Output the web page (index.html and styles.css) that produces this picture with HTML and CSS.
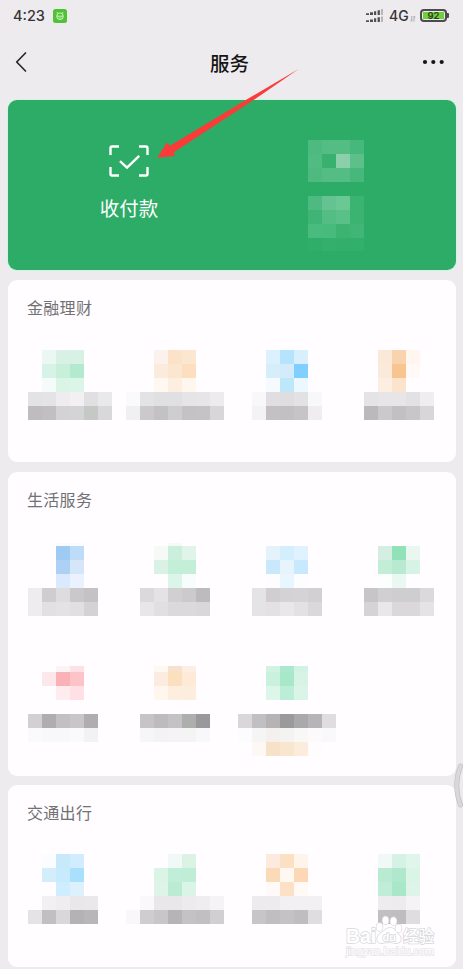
FILE: index.html
```html
<!DOCTYPE html>
<html lang="zh-CN">
<head>
<meta charset="utf-8">
<title>服务</title>
<link rel="stylesheet" href="styles.css">
</head>
<body>
<div class="screen">
  <header class="status">
    <span class="clock">4:23</span>
    <svg class="app-badge" width="14" height="14" viewBox="0 0 14 14">
      <rect width="14" height="14" rx="2.5" fill="#50c236"/>
      <g fill="none" stroke="#e8ffe2" stroke-width="0.8"><rect x="3.8" y="4" width="6.4" height="6.6" rx="3"/><path d="M3.8 7.2h6.400M4.800 4.400L3.900 3M9.200 4.400l.9-1.400M5.500 9h3"/></g>
    </svg>
    <div class="status-right">
      <svg class="signal" width="18" height="14" viewBox="0 0 18 14" fill="#505052">
        <path d="M0 4.3h3v1.7H0zM4 3.3h3v2.7H4zM8 2.2h2.2v3.8H8zM11.6 1.2h2.3v4.8h-2.3zM0 11.3h3v1.7H0zM4 10.4h3v2.6H4zM8 9.3h2.2v3.7H8zM11.6 8.2h2.3v4.8h-2.3z"/>
        <path d="M15 0h2v6h-2zM15 7.5h2v5.5h-2z" fill="#b7b6b9"/>
      </svg>
      <span class="network">4G</span>
      <svg class="updown" width="6" height="7" viewBox="0 0 6 7" fill="none" stroke="#aaa9ac"><path d="M1.8 1v5.3L.4 5M4 6.5V1l1.4 1.3"/></svg>
      <span class="battery"><span class="level">92</span></span>
    </div>
  </header>
  <nav class="nav">
    <svg width="14" height="22" viewBox="0 0 14 22" fill="none" stroke="#29282b" stroke-width="1.7" stroke-linecap="round" stroke-linejoin="round"><path d="M11.500 2L2.700 11l8.800 9"/></svg>
    <h1>服务</h1>
    <svg width="24" height="6" viewBox="0 0 24 6" fill="#161518"><circle cx="4" cy="3" r="2.1"/><circle cx="12.3" cy="3" r="2.1"/><circle cx="20.7" cy="3" r="2.1"/></svg>
  </nav>
  <main class="cards">
    <section class="pay">
      <div class="pay-item">
        <svg width="40" height="32" viewBox="0 0 40 32" fill="none" stroke="#fff" stroke-width="2.4">
          <path d="M10 1.5H3Q1.5 1.5 1.5 3v7M30 1.5h7q1.5 0 1.5 1.5v7M10 30.5H3Q1.5 30.5 1.5 29v-7M30 30.5h7q1.5 0 1.5-1.5v-7M11 16.200l7 6.500L30.200 10.800"/>
        </svg>
        <span>收付款</span>
      </div>
      <div class="pay-item"><svg class="mosaic wallet" width="56" height="111" data-tile="wallet"></svg></div>
    </section>
    <section class="card finance">
      <h2>金融理财</h2>
      <div class="grid">
        <svg class="mosaic" data-tile="f1"></svg><svg class="mosaic" data-tile="f2"></svg><svg class="mosaic" data-tile="f3"></svg><svg class="mosaic" data-tile="f4"></svg>
      </div>
    </section>
    <section class="card life">
      <h2>生活服务</h2>
      <div class="grid">
        <svg class="mosaic" data-tile="l1"></svg><svg class="mosaic" data-tile="l2"></svg><svg class="mosaic" data-tile="l3"></svg><svg class="mosaic" data-tile="l4"></svg>
        <svg class="mosaic" data-tile="l5"></svg><svg class="mosaic" data-tile="l6"></svg><svg class="mosaic" data-tile="l7"></svg>
      </div>
    </section>
    <section class="card travel">
      <h2>交通出行</h2>
      <div class="grid">
        <svg class="mosaic" data-tile="t1"></svg><svg class="mosaic" data-tile="t2"></svg><svg class="mosaic" data-tile="t3"></svg><svg class="mosaic" data-tile="t4"></svg>
      </div>
    </section>
  </main>
  <svg class="arrow" width="144" height="92" viewBox="0 0 144 92" fill="#fb3b38"><path d="M142.700 2L90.700 32.500L14 78.700L10.700 75.700L1.300 90.700L19 89L17.500 85.500L97.500 33z"/></svg>
  <svg class="handle" width="10" height="46" viewBox="0 0 10 46" fill="none" stroke-linecap="round"><path d="M6.500 3Q-1 22 6.500 42" stroke="#c4c3c6" stroke-width="5"/><path d="M6.500 3Q-1 22 6.500 42" stroke="#d8d7da" stroke-width="3.600"/></svg>
  <svg class="watermark" width="94" height="46" viewBox="0 0 94 46">
    <g class="mark">
      <text x="2" y="29" font-size="20" textLength="30" lengthAdjust="spacingAndGlyphs">Bai</text>
      <text class="cjk" x="59" y="28" font-size="15.500" textLength="31">经验</text>
      <text class="url" x="2" y="41" font-size="11" textLength="88">jingyan.baidu.com</text>
      <path d="M45 14c4-1 7 3 9 6 5 4 3 10-3 9-4-1-8-1-12 0-6 1-8-5-3-9 3-2 5-5 9-6z"/>
      <ellipse cx="35.500" cy="13" rx="3" ry="4"/><ellipse cx="41.500" cy="6.500" rx="3" ry="4"/><ellipse cx="49.500" cy="7.200" rx="3" ry="4"/><ellipse cx="54.500" cy="14.500" rx="3" ry="4"/>
      <text x="38.500" y="27" font-size="11">du</text>
    </g>
  </svg>
</div>
<script src="script.js"></script>
</body>
</html>
```
FILE: styles.css
```css
* { box-sizing: border-box; }
body { margin: 0; background: #edebee; font-family: "Noto Sans CJK SC", sans-serif; }
.screen { position: relative; width: 463px; height: 969px; overflow: hidden; }
.status { display: flex; align-items: center; height: 32px; padding: 0 14px 0 13px; color: #353437; font-family: Inter, sans-serif; }
.clock { width: 32px; font-size: 14.500px; font-weight: 500; line-height: 20px; white-space: nowrap; }
.app-badge { margin: -1px 0 0 8px; }
.status-right { display: flex; align-items: center; margin-left: auto; }
.signal { margin-top: 0; }
.network { width: 21px; margin-left: 5px; font-size: 14px; font-weight: 500; line-height: 20px; }
.updown { margin: 5px 4px 0 0; }
.battery { position: relative; width: 27px; height: 13px; margin: -1px 2px 0 0; padding: 1px; border: 2px solid #4c4b4f; border-radius: 4px; }
.battery::after { content: ""; position: absolute; right: -4px; top: 2px; width: 2px; height: 5px; border-radius: 0 1px 1px 0; background: #4c4b4f; }
.level { display: block; height: 7px; background: #72cf3b; color: #294121; font-size: 9.500px; font-weight: 600; line-height: 7px; text-align: center; }
.nav { display: flex; align-items: center; justify-content: space-between; height: 60px; padding: 0 18px 0 14px; }
.nav h1 { margin: 1px 0 0 10px; color: #161518; font-size: 19.500px; font-weight: 500; line-height: 30px; }
.cards { padding: 8px 7px 0 8px; }
.pay { display: flex; width: 448px; height: 170px; border-radius: 9px; background: #2dac67; box-shadow: 0 0 0 .5px #b5fbd6; }
.pay-item { display: flex; flex: none; flex-direction: column; align-items: center; width: 242px; padding-top: 45px; color: #fff; font-size: 19.500px; line-height: 28px; }
.pay-item:last-child { align-items: flex-start; width: 206px; padding: 40px 0 0 58px; }
.pay-item span { margin-top: 17px; }
.card { width: 448px; margin-top: 10px; border-radius: 9px; background: #fffdff; }
.card h2 { margin: 0; padding: 15px 19px 1px; color: #717073; font-size: 16px; font-weight: 400; line-height: 24px; letter-spacing: .3px; }
.finance { height: 182px; }
.life { height: 303.500px; }
.travel { height: 182px; margin-top: 9.500px; }
.grid { display: grid; grid-template-columns: repeat(4, 112px); padding-top: 30px; }
.life .grid { padding-top: 31px; grid-auto-rows: 123px; }
.travel .grid { padding-top: 29px; }
.mosaic { display: block; width: 112px; height: 93px; shape-rendering: crispEdges; }
.wallet { width: 56px; height: 111px; }
.arrow, .handle, .watermark { position: absolute; }
.arrow { left: 156px; top: 67px; }
.handle { left: 454px; top: 763px; }
.watermark { left: 344px; top: 914px; }
.mark { fill: #fff; stroke: #d9d8db; stroke-width: 1.500px; paint-order: stroke; font-family: "Liberation Sans", sans-serif; font-weight: 700; }
.cjk { font-family: "Noto Sans CJK SC", sans-serif; font-weight: 500; }
.url { font-weight: 400; stroke: #e6e5e8; }
```
FILE: script.js
```js
// Each row: top, height, first cell, then one colour per 14px cell.
const tiles = {
  wallet: ["0 14 0 4dba80 53bd84 53bd84 47b87b","14 14 0 50bb82 38b16e 8bd0aa 5bc08a","28 14 0 4eba80 53bd84 53bd84 47b87b","56 14 0 4eb980 65c391 69c894 3bb371","70 14 0 3fb474 54bd84 59c088 3bb371","84 14 0 49bb7f 46bb7c 3cb371 41b575","98 13 0 30ae69 34b06d 32af6b 32af6b"],
  f1: ["0 14 2 eaf7f2 d7f2e4 d7f2e4","14 14 2 d7f2e6 c7efda b2e9cf","28 14 2 f4fbf8 daf4e6 dbf5e8","42 14 1 e3e2e4 e4e3e5 eeecef f2f0f3 e0dfe1 e9e8ea","56 14 1 bebcbf c1bfc1 d3d2d4 d4d3d5 c6c8c6 d8d7d9"],
  f2: ["0 14 2 fcf2ed fbe2c9 fbe6d0","14 14 2 faebdc fbe6cf fddfc0","28 14 2 fff8f0 fceee0 fff7ee","42 14 0 faf9fb e3e2e4 e0dfe1 e0dfe1 e5e4e6 e7e5e8 edebee","56 14 0 f0eff1 cbc9cc c3c1c3 cecdcf c4c2c4 c5c3c5 d8d6d9"],
  f3: ["0 14 2 dcf1fe b6e4fc d8effd","14 14 2 d5eefa d3ebfa 80d0ff","28 14 2 f5fafe bde8fc ecf8fe","42 14 1 f8f7f9 e0dee0 dfdddf e2e1e3 f8f7f9","56 14 1 f3f2f4 c3c1c3 c2c0c2 c6c4c7 efedf0"],
  f4: ["0 14 2 fae9d9 f9d3ae fff7ef","14 14 2 fbeada f8c48f fffaf6","28 14 2 fceee1 fce3cc","42 14 1 e4e3e5 e7e5e8 e7e5e8 e2e1e3 efedf0","56 14 1 bbb9bc cbc9cc c2c0c2 c8c6c8 d8d6d9"],
  l1: ["0 3 3 fafbfd fafbfd","3 14 3 9fcaf2 bedcf8","17 14 3 add1f5 d5e6f8","31 14 3 dae9fd eaf2ff","45 14 1 eeecef cfcdd0 dedcdf cac8cb c4c2c5","59 14 1 eeecef e2e0e3 e4e2e5 e1dfe2 d4d2d5"],
  l2: ["0 3 3 f5faf7","3 14 2 f5faf7 caefdc e0f4e9","17 14 2 daf2e5 c3eed8 c5eed8","31 14 3 dbf5e8 f7fdfc","45 14 1 dbd9dc e4e2e5 d1cfd2 cccacd bdbbbe","59 14 1 e8e6e9 e1dfe2 dbd9dc dbd9dc d9d7da"],
  l3: ["3 14 2 e4f3fb d3eefd dff2ff","17 14 2 c8e9fb e8f4fb c8e9fd","31 14 2 fdfdff e8f7ff fdfdff","45 14 1 e4e3e5 d0ced1 d4d2d5 d5d3d6 d2d0d3","59 14 1 e4e3e5 e3e1e4 e9e7ea e3e1e4 dad8db"],
  l4: ["3 14 2 d5eee2 91e2b9 e9f7f0","17 14 2 c2edd7 b8ead1 d7f3e5","31 14 2 fbfffd e9f9f1","45 14 1 c7c5c8 d1cfd2 cecdd0 cecdd0 dbd9dc","59 14 1 d5d3d6 e9e7ea dad8db dad8db e5e3e6"],
  l5: ["0 6 3 fdf3f4 fde1e5","6 14 2 fce7eb fbb2b6 fcc4c9","20 14 3 feecef ffe1e5","48 14 1 d2d0d3 afadb0 c2c0c3 c8c6c9 afadb0","62 14 1 faf9fb f8f7f9 f8f7f9 faf9fb f2f1f3"],
  l6: ["0 6 2 fef8f3 f8e0cd fbefe4","6 14 2 fcecdf fae0bf fdebd8","20 14 2 fff6ee fdeee0 fdeddf","48 14 1 c6c4c7 bdbbbe c4c2c5 adafad 9a989b","62 14 1 f6f5f7 f3f2f4 f5f3f6 f4f4f5 f8f7f9"],
  l7: ["0 6 2 d2f3e3 ace8cd d2f3e3","6 14 2 caf0de a8e8ca d6f3e5","20 14 2 dcf6e9 bcedd7 daf5e8","48 14 0 d9d7da c1bfc2 b5b3b6 999a99 aaa8ab b6b4b7 dfdde0","62 14 0 fcfbfe f6f5f6 f3f0ed f3f3f1 f8f8f6 fcfafb f9f8fb","76 14 1 fef8f5 f8e2c7 f9e6ce fcecdc fefcfd"],
  t1: ["0 14 2 fbfcfe c8e9fa d1edfd","14 14 2 d3edfb c7eafd a8e0fd","28 14 3 ceedff ddf1fc","42 14 1 fffdff f2f0f3 efedf0 e9e7ea eae8eb","56 14 1 e4e3e5 c1bfc2 d9d7da b4b2b5 b8b6b9"],
  t2: ["0 14 3 f0f9f6 daf3e5","14 14 2 daf4e6 c1eed8 bfedd6","28 14 2 def4e9 bbebd3 daf5e7","42 14 1 f9f8fa e9e7ea e9e7ea edebee efedf0 f5f3f6","56 14 0 f8f7f9 cfcdd0 c8c6c9 b6b4b7 c4c2c5 c1bfc2 d1cfd2"],
  t3: ["0 14 2 fceade fbe0c3 fff4eb","14 14 2 fbdab7 fff8f2 fdd8b6","28 14 2 fffaf7 fde1c6 fffaf6","42 14 1 edebee edebee f2f0f3 f2f0f3 f2f0f3","56 14 1 c7c5c8 c0bec1 c4c2c5 bfbdc0 dfdde0"],
  t4: ["0 14 2 f0f9f6 d5f2e4 e0f5eb","14 14 2 b9ebd3 afe8cc daf4e6","28 14 2 bfedd7 a8e8c9 def4e9","42 14 2 eeecef edebee f5f3f6","56 14 2 c1bfc2 bfbdc0 dfdde0"]
};
for (const svg of document.querySelectorAll(".mosaic")) {
  const offset = svg.dataset.tile === "wallet" ? 0 : 6;
  for (const row of tiles[svg.dataset.tile]) {
    const [y, h, first, ...colors] = row.split(" ");
    colors.forEach((color, i) => {
      const cell = document.createElementNS("http://www.w3.org/2000/svg", "rect");
      cell.setAttribute("x", offset + (Number(first) + i) * 14);
      cell.setAttribute("y", y);
      cell.setAttribute("width", 14);
      cell.setAttribute("height", h);
      cell.setAttribute("fill", "#" + color);
      svg.appendChild(cell);
    });
  }
}
```
